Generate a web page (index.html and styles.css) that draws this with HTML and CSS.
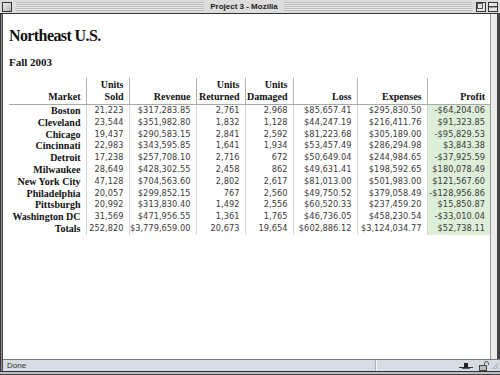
FILE: index.html
```html
<!DOCTYPE html>
<html>
<head>
<meta charset="utf-8">
<title>Project 3 - Mozilla</title>
<link rel="stylesheet" href="styles.css">
</head>
<body>
<div class="window">
  <div class="titlebar">
    <span class="box"></span>
    <div class="stripes"><span class="title">Project 3 - Mozilla</span></div>
    <svg class="wbtn" width="10" height="10" viewBox="0 0 10 10"><rect x="0.5" y="0.5" width="9" height="9" fill="#e6e6e6" stroke="#333"/><rect x="1.5" y="1.5" width="5" height="5" fill="none" stroke="#555"/></svg>
    <svg class="wbtn" width="10" height="10" viewBox="0 0 10 10"><rect x="0.5" y="0.5" width="9" height="9" fill="#e6e6e6" stroke="#333"/><line x1="1" y1="4.5" x2="9" y2="4.5" stroke="#444"/><line x1="1" y1="5.5" x2="9" y2="5.5" stroke="#999"/></svg>
  </div>
  <div class="body">
    <div class="lframe"></div>
    <div class="main">
      <div class="page">
        <h1 class="heading">Northeast U.S.</h1>
        <h2 class="subheading">Fall 2003</h2>
        <table class="report">
          <colgroup>
            <col class="c-market"><col class="c-sold"><col class="c-rev"><col class="c-ret"><col class="c-dam"><col class="c-loss"><col class="c-exp"><col class="c-profit">
          </colgroup>
          <thead>
            <tr><th>Market</th><th>Units<br>Sold</th><th>Revenue</th><th>Units<br>Returned</th><th>Units<br>Damaged</th><th>Loss</th><th>Expenses</th><th>Profit</th></tr>
          </thead>
          <tbody>
            <tr><th>Boston</th><td>21,223</td><td>$317,283.85</td><td>2,761</td><td>2,968</td><td>$85,657.41</td><td>$295,830.50</td><td class="profit">-$64,204.06</td></tr>
            <tr><th>Cleveland</th><td>23,544</td><td>$351,982.80</td><td>1,832</td><td>1,128</td><td>$44,247.19</td><td>$216,411.76</td><td class="profit">$91,323.85</td></tr>
            <tr><th>Chicago</th><td>19,437</td><td>$290,583.15</td><td>2,841</td><td>2,592</td><td>$81,223.68</td><td>$305,189.00</td><td class="profit">-$95,829.53</td></tr>
            <tr><th>Cincinnati</th><td>22,983</td><td>$343,595.85</td><td>1,641</td><td>1,934</td><td>$53,457.49</td><td>$286,294.98</td><td class="profit">$3,843.38</td></tr>
            <tr><th>Detroit</th><td>17,238</td><td>$257,708.10</td><td>2,716</td><td>672</td><td>$50,649.04</td><td>$244,984.65</td><td class="profit">-$37,925.59</td></tr>
            <tr><th>Milwaukee</th><td>28,649</td><td>$428,302.55</td><td>2,458</td><td>862</td><td>$49,631.41</td><td>$198,592.65</td><td class="profit">$180,078.49</td></tr>
            <tr><th>New York City</th><td>47,128</td><td>$704,563.60</td><td>2,802</td><td>2,617</td><td>$81,013.00</td><td>$501,983.00</td><td class="profit">$121,567.60</td></tr>
            <tr><th>Philadelphia</th><td>20,057</td><td>$299,852.15</td><td>767</td><td>2,560</td><td>$49,750.52</td><td>$379,058.49</td><td class="profit">-$128,956.86</td></tr>
            <tr><th>Pittsburgh</th><td>20,992</td><td>$313,830.40</td><td>1,492</td><td>2,556</td><td>$60,520.33</td><td>$237,459.20</td><td class="profit">$15,850.87</td></tr>
            <tr><th>Washington DC</th><td>31,569</td><td>$471,956.55</td><td>1,361</td><td>1,765</td><td>$46,736.05</td><td>$458,230.54</td><td class="profit">-$33,010.04</td></tr>
            <tr><th>Totals</th><td>252,820</td><td>$3,779,659.00</td><td>20,673</td><td>19,654</td><td>$602,886.12</td><td>$3,124,034.77</td><td class="profit">$52,738.11</td></tr>
          </tbody>
        </table>
      </div>
      <div class="status">
        <span class="status-text">Done</span>
        <span class="status-div"></span>
        <span class="status-icons">
          <svg width="14" height="8" viewBox="0 0 14 8"><line x1="0" y1="5.5" x2="14" y2="5.5" stroke="#333"/><rect x="5" y="1" width="4" height="5" fill="#222"/><line x1="3" y1="6.5" x2="11" y2="6.5" stroke="#555"/></svg>
          <svg width="10" height="10" viewBox="0 0 10 10"><path d="M5.5 4.5V2.5a2 2 0 0 1 4 0V4" fill="none" stroke="#555"/><rect x="0.5" y="4.5" width="7" height="5" fill="#bbb" stroke="#444"/></svg>
        </span>
      </div>
    </div>
    <div class="rframe">
      <div class="rstrip"></div>
      <svg class="grip" width="10" height="12" viewBox="0 0 10 12"><line x1="9" y1="3" x2="2" y2="10" stroke="#999"/><line x1="9" y1="6" x2="5" y2="10" stroke="#999"/><line x1="9" y1="9" x2="8" y2="10" stroke="#999"/></svg>
    </div>
  </div>
  <div class="bframe"></div>
</div>
</body>
</html>
```
FILE: styles.css
```css
html, body {
  margin: 0;
  padding: 0;
  background: #fff;
}
.window {
  width: 500px;
  height: 375px;
  display: flex;
  flex-direction: column;
  overflow: hidden;
  background: #cfcfcf;
}
.titlebar {
  height: 14px;
  box-sizing: border-box;
  border-bottom: 1px solid #333;
  background: #dcdcdc;
  display: flex;
  align-items: center;
  padding: 0 2px 0 2px;
  gap: 2px;
}
.box {
  width: 8px;
  height: 8px;
  border: 1px solid #333;
  background: linear-gradient(135deg, #f2f2f2, #b0b0b0);
}
.wbtn { display: block; }
.stripes {
  flex: 1;
  height: 9px;
  margin: 0 2px;
  background: repeating-linear-gradient(to bottom, #bdbdbd 0 1px, #e6e6e6 1px 2px);
  display: flex;
  justify-content: center;
  align-items: center;
}
.title {
  background: #dcdcdc;
  padding: 0 6px;
  font: bold 8px/9px "Liberation Sans", Arial, sans-serif;
  color: #222;
}
.body {
  flex: 1;
  display: flex;
  min-height: 0;
}
.lframe {
  width: 3px;
  background: linear-gradient(to right, #3a3a3a 0 1px, #8a8a8a 1px 2px, #4a4a4a 2px 3px);
}
.main {
  flex: 1;
  display: flex;
  flex-direction: column;
  min-width: 0;
}
.page {
  flex: 1;
  background: #fff;
  padding: 13px 0 0 6px;
  overflow: hidden;
}
.heading {
  margin: 0;
  font: bold 16px/18px "Liberation Serif", "Times New Roman", serif;
  letter-spacing: -0.6px;
  color: #111;
}
.subheading {
  margin: 11px 0 0 0;
  font: bold 11px/13px "Liberation Serif", "Times New Roman", serif;
  color: #111;
}
.report {
  margin-top: 9px;
  width: 481px;
  table-layout: fixed;
  border-collapse: collapse;
}
.c-market { width: 77px; }
.c-sold { width: 43px; }
.c-rev { width: 67px; }
.c-ret { width: 49px; }
.c-dam { width: 48px; }
.c-loss { width: 64px; }
.c-exp { width: 70px; }
.c-profit { width: 63px; }
.report th, .report td {
  text-align: right;
  padding: 0 5px 0 0;
  white-space: nowrap;
}
.report thead th {
  font: bold 10px/12px "Liberation Serif", "Times New Roman", serif;
  color: #111;
  vertical-align: bottom;
  padding-top: 1px;
  padding-bottom: 1px;
  border-bottom: 1px solid #a8a8a8;
  border-left: 1px solid #b4b4b4;
}
.report thead th:first-child { border-left: none; }
.report tbody th {
  font: bold 10px/11.8px "Liberation Serif", "Times New Roman", serif;
  color: #111;
}
.report tbody td {
  font: 8.2px/11.8px "DejaVu Sans", Verdana, sans-serif;
  letter-spacing: 0.05px;
  color: #3a3a3a;
  border-left: 1px solid #d6d6d6;
}
.report td.profit {
  background: #ddeed9;
}
.status {
  height: 12px;
  box-sizing: border-box;
  border-top: 1px solid #7a7a7a;
  background: #d5dce4;
  display: flex;
  align-items: center;
}
.status-text {
  padding-left: 4px;
  width: 368px;
  font: 8px/10px "Liberation Sans", Arial, sans-serif;
  color: #333;
}
.status-div {
  width: 1px;
  height: 11px;
  background: #f4f6f8;
  border-left: 1px solid #a9b0b8;
}
.status-icons {
  flex: 1;
  display: flex;
  justify-content: flex-end;
  align-items: center;
  gap: 6px;
  padding-right: 1px;
}
.status-icons svg { display: block; }
.rframe {
  width: 10px;
  display: flex;
  flex-direction: column;
  background: #444;
}
.rstrip {
  flex: 1;
  width: 7px;
  box-sizing: border-box;
  border-left: 1px solid #9a9a9a;
  background: #ececec;
}
.grip {
  display: block;
  background: #d5dce4;
  border-top: 1px solid #7a7a7a;
  box-sizing: border-box;
}
.bframe {
  height: 4px;
  background: linear-gradient(to bottom, #333 0 1px, #bdbdbd 1px 3px, #444 3px 4px);
}
```
